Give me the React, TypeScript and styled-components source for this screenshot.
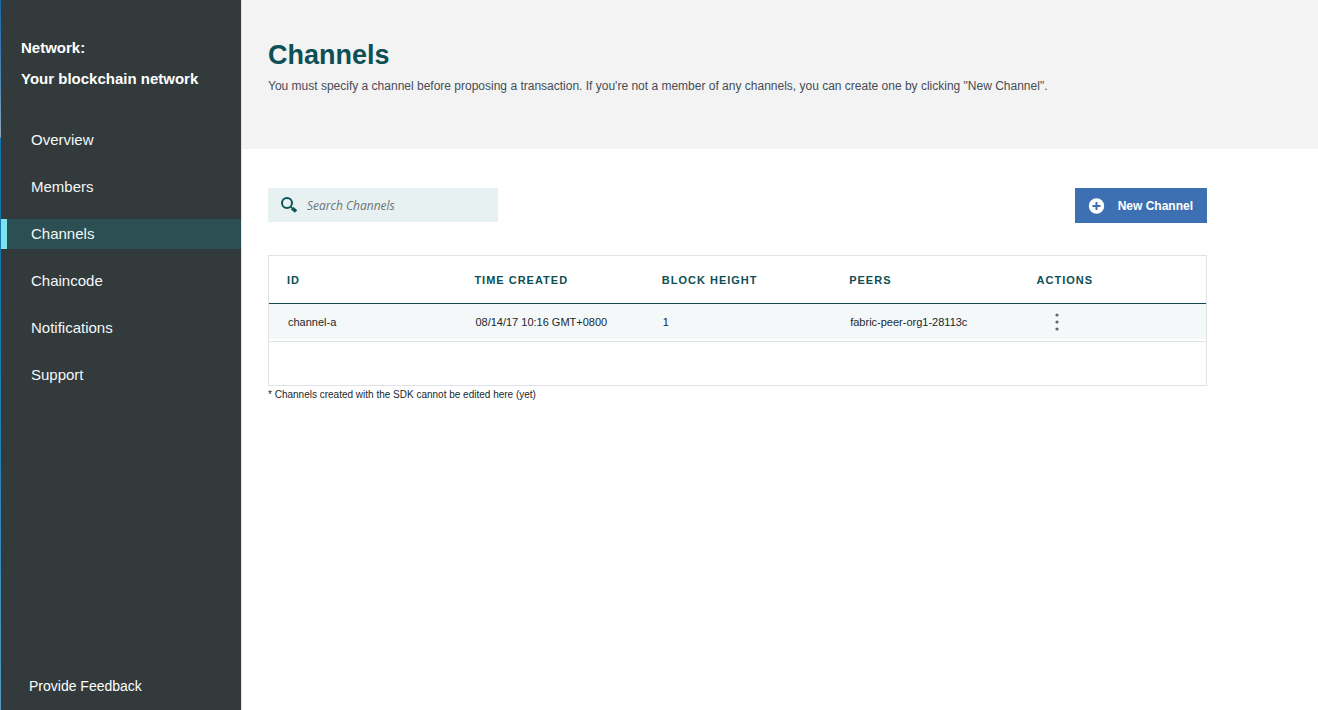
import React from "react";
import styled, { createGlobalStyle } from "styled-components";

const GlobalStyle = createGlobalStyle`
  *, *::before, *::after { box-sizing: border-box; }
  body {
    margin: 0;
    background: #ffffff;
    color: #21272d;
    font-family: "Liberation Sans", Arial, sans-serif;
  }
  button, input { font-family: inherit; }
`;

const Page = styled.div`
  display: flex;
  min-height: 100vh;
`;

const Edge = styled.div`
  flex: 0 0 1px;
  background: linear-gradient(#1a67ac 0, #4f87b8 80px, #8fa9ba 137px, #1273ae 138px, #1d7db4 400px, #549ac4 100%);
`;

const Sidebar = styled.aside`
  flex: 0 0 241px;
  display: flex;
  flex-direction: column;
  background: #323a3c;
  border-right: 1px solid #dfe3e6;
  color: #ffffff;
`;

const NetworkTitle = styled.h2`
  margin: 0;
  padding: 32px 20px 0;
  font-size: 15px;
  line-height: 31px;
  font-weight: 700;
`;

const NetworkName = styled.span`
  display: block;
`;

const Nav = styled.nav`
  display: flex;
  flex-direction: column;
  gap: 17px;
  margin-top: 31px;
`;

const NavLink = styled.a<{ $active?: boolean }>`
  display: block;
  padding-left: ${(p) => (p.$active ? 24 : 30)}px;
  border-left: ${(p) => (p.$active ? "6px solid #7de3ed" : "0")};
  background: ${(p) => (p.$active ? "#2b4f52" : "transparent")};
  color: #f4f7f7;
  font-size: 15px;
  line-height: 30px;
  text-decoration: none;
`;

const Feedback = styled.a`
  margin-top: auto;
  padding: 0 28px 14px;
  color: #ffffff;
  font-size: 14px;
  line-height: 20px;
  text-decoration: none;
`;

const Main = styled.main`
  flex: 1;
  min-width: 0;
`;

const Header = styled.header`
  min-height: 149px;
  padding: 39px 26px 0;
  background: #f3f3f3;
`;

const Title = styled.h1`
  margin: 0;
  color: #0d4f56;
  font-size: 27px;
  line-height: 32px;
  font-weight: 700;
`;

const Description = styled.p`
  margin: 5px 0 0;
  color: #464d56;
  font-size: 12px;
  line-height: 20px;
`;

const Content = styled.section`
  padding: 39px 111px 24px 26px;
`;

const Toolbar = styled.div`
  display: flex;
  justify-content: space-between;
  align-items: flex-start;
`;

const SearchBox = styled.label`
  display: flex;
  align-items: center;
  gap: 10px;
  width: 230px;
  height: 34px;
  padding-left: 13px;
  background: #e7f1f2;
`;

const SearchInput = styled.input`
  flex: 1;
  min-width: 0;
  padding: 0;
  border: 0;
  outline: 0;
  background: transparent;
  color: #21272d;
  font-family: "Open Sans", "Noto Sans", sans-serif;
  font-size: 12px;
  font-style: italic;
  &::placeholder { color: #6b7476; opacity: 1; }
`;

const NewButton = styled.button`
  display: flex;
  align-items: center;
  gap: 13px;
  height: 35px;
  padding: 0 14px 0 13px;
  border: 0;
  background: #3d70b2;
  color: #ffffff;
  font-size: 12px;
  font-weight: 700;
`;

const TableFrame = styled.div`
  margin-top: 32px;
  padding-bottom: 43px;
  border: 1px solid #dfe3e6;
`;

const Table = styled.table`
  width: 100%;
  table-layout: fixed;
  border-collapse: separate;
  border-spacing: 0;
`;

const HeadCell = styled.th`
  height: 48px;
  padding: 0 0 0 18px;
  border-bottom: 1px solid #0f4b52;
  color: #0d4f56;
  font-size: 11px;
  font-weight: 700;
  letter-spacing: 1px;
  text-align: left;
`;

const Cell = styled.td`
  height: 38px;
  padding: 0 0 2px 19px;
  border-bottom: 1px solid #dfe3e6;
  box-shadow: inset 0 -2px #ffffff;
  background: #f4f8f9;
  font-size: 11px;
`;

const MenuButton = styled.button`
  display: flex;
  padding: 0 17px;
  border: 0;
  background: transparent;
`;

const Note = styled.p`
  margin: 2px 0 0;
  font-size: 10px;
  line-height: 14px;
`;

const links = ["Overview", "Members", "Channels", "Chaincode", "Notifications", "Support"];
const columns = ["ID", "TIME CREATED", "BLOCK HEIGHT", "PEERS", "ACTIONS"];

const SearchIcon = () => (
  <svg width="16" height="16" viewBox="0 0 16 16" fill="none" stroke="#0d5458" aria-hidden="true">
    <circle cx="6" cy="6" r="5" strokeWidth="2" />
    <path d="M9.5 9.5l1.5 1.5" strokeWidth="1.2" />
    <path d="M11 11l4 3.4" strokeWidth="3.6" />
  </svg>
);

const AddIcon = () => (
  <svg width="17" height="16" viewBox="0 0 17 16" aria-hidden="true">
    <circle cx="8.5" cy="8" r="7.7" fill="#ffffff" />
    <path d="M8.5 4v8M4.5 8h8" stroke="#3d70b2" strokeWidth="2" />
  </svg>
);

const MoreIcon = () => (
  <svg width="4" height="18" viewBox="0 0 4 18" fill="#5a6872" aria-hidden="true">
    <circle cx="2" cy="2" r="1.6" />
    <circle cx="2" cy="9" r="1.6" />
    <circle cx="2" cy="16" r="1.6" />
  </svg>
);

export default function App() {
  return (
    <>
      <GlobalStyle />
      <Page>
        <Edge />
        <Sidebar>
          <NetworkTitle>
            Network:
            <NetworkName>Your blockchain network</NetworkName>
          </NetworkTitle>
          <Nav>
            {links.map((name) => (
              <NavLink key={name} href="#" $active={name === "Channels"}>
                {name}
              </NavLink>
            ))}
          </Nav>
          <Feedback href="#">Provide Feedback</Feedback>
        </Sidebar>
        <Main>
          <Header>
            <Title>Channels</Title>
            <Description>
              You must specify a channel before proposing a transaction. If you're not a member of any
              channels, you can create one by clicking "New Channel".
            </Description>
          </Header>
          <Content>
            <Toolbar>
              <SearchBox>
                <SearchIcon />
                <SearchInput type="text" placeholder="Search Channels" aria-label="Search Channels" />
              </SearchBox>
              <NewButton type="button">
                <AddIcon />
                New Channel
              </NewButton>
            </Toolbar>
            <TableFrame>
              <Table>
                <thead>
                  <tr>
                    {columns.map((name) => (
                      <HeadCell key={name} scope="col">
                        {name}
                      </HeadCell>
                    ))}
                  </tr>
                </thead>
                <tbody>
                  <tr>
                    <Cell>channel-a</Cell>
                    <Cell>08/14/17 10:16 GMT+0800</Cell>
                    <Cell>1</Cell>
                    <Cell>fabric-peer-org1-28113c</Cell>
                    <Cell>
                      <MenuButton type="button" aria-label="Channel actions">
                        <MoreIcon />
                      </MenuButton>
                    </Cell>
                  </tr>
                </tbody>
              </Table>
            </TableFrame>
            <Note>* Channels created with the SDK cannot be edited here (yet)</Note>
          </Content>
        </Main>
      </Page>
    </>
  );
}
